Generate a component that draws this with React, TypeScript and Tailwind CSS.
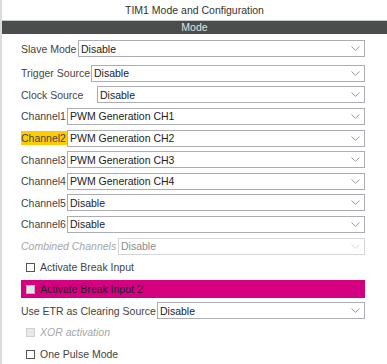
import React from "react";

type Row =
  | { kind: "select"; label: string; value: string; labelWidth: number; highlight?: boolean; disabled?: boolean }
  | { kind: "check"; label: string; bar?: boolean; disabled?: boolean };

const rows: Row[] = [
  { kind: "select", label: "Trigger Source", value: "Disable", labelWidth: 70 },
  { kind: "select", label: "Clock Source", value: "Disable", labelWidth: 76 },
  { kind: "select", label: "Channel1", value: "PWM Generation CH1", labelWidth: 46 },
  { kind: "select", label: "Channel2", value: "PWM Generation CH2", labelWidth: 46, highlight: true },
  { kind: "select", label: "Channel3", value: "PWM Generation CH3", labelWidth: 46 },
  { kind: "select", label: "Channel4", value: "PWM Generation CH4", labelWidth: 46 },
  { kind: "select", label: "Channel5", value: "Disable", labelWidth: 46 },
  { kind: "select", label: "Channel6", value: "Disable", labelWidth: 46 },
  { kind: "select", label: "Combined Channels", value: "Disable", labelWidth: 97, disabled: true },
  { kind: "check", label: "Activate Break Input" },
  { kind: "check", label: "Activate Break Input 2", bar: true },
  { kind: "select", label: "Use ETR as Clearing Source", value: "Disable", labelWidth: 136 },
  { kind: "check", label: "XOR activation", disabled: true },
  { kind: "check", label: "One Pulse Mode" },
];

function Chevron({ disabled }: { disabled?: boolean }) {
  return (
    <svg width="9" height="5" viewBox="0 0 9 5" className="mr-[4px] shrink-0">
      <path d="M0.5 0.5 L4.5 4.3 L8.5 0.5" fill="none" stroke={disabled ? "#d6d6d6" : "#9a9a9a"} strokeWidth="1" />
    </svg>
  );
}

function SelectBox({ value, disabled }: { value: string; disabled?: boolean }) {
  return (
    <div
      className={`flex h-[17px] flex-1 items-center justify-between border bg-white pl-[2px] ${
        disabled ? "border-[#d4d6d9] text-[#8c8c8c]" : "border-[#abadb3] text-[#222]"
      }`}
    >
      <span>{value}</span>
      <Chevron disabled={disabled} />
    </div>
  );
}

function CheckBox({ disabled, onBar }: { disabled?: boolean; onBar?: boolean }) {
  return (
    <span
      className={`inline-block h-[9px] w-[9px] shrink-0 border ${
        onBar
          ? "border-[#b8b8b8] bg-[#e6e6e6]"
          : disabled
          ? "border-[#cfcfcf] bg-[#e8e8e8]"
          : "border-[#555] bg-white"
      }`}
    />
  );
}

function SelectRow({ row }: { row: Extract<Row, { kind: "select" }> }) {
  return (
    <div className="flex h-[21.6px] items-center">
      <div
        className={`flex h-[14px] shrink-0 items-center ${row.highlight ? "bg-[#ffcc00]" : ""} ${
          row.disabled ? "italic text-[#a6a6a6]" : "text-[#444]"
        }`}
        style={{ width: row.labelWidth }}
      >
        {row.label}
      </div>
      <SelectBox value={row.value} disabled={row.disabled} />
    </div>
  );
}

function CheckRow({ row }: { row: Extract<Row, { kind: "check" }> }) {
  if (row.bar) {
    return (
      <div className="flex h-[21.6px] items-center">
        <div className="flex h-[18px] flex-1 items-center gap-[5px] bg-[#d5007f] pl-[5px] text-[#222]">
          <CheckBox onBar />
          <span>{row.label}</span>
        </div>
      </div>
    );
  }
  return (
    <div className="flex h-[21.6px] items-center gap-[5px] pl-[5px]">
      <CheckBox disabled={row.disabled} />
      <span className={row.disabled ? "italic text-[#a6a6a6]" : "text-[#444]"}>{row.label}</span>
    </div>
  );
}

export default function App() {
  return (
    <div
      className="relative h-[364px] w-[387px] overflow-hidden border-l-2 border-[#dcdcdc] bg-white text-[10.5px] leading-none"
      style={{ fontFamily: '"Liberation Sans", Arial, sans-serif' }}
    >
      <div className="flex h-[20px] items-center justify-center text-[10.5px] text-[#333]">
        TIM1 Mode and Configuration
      </div>
      <div className="flex h-[14px] items-center justify-center border-t border-[#c9c9c9] bg-[#4b4d4d] text-[#e2e2e2]">
        Mode
      </div>
      <div className="pl-[19px] pr-[22px] pt-[4px]">
        <div className="flex h-[21.6px] items-center">
          <div className="w-[57px] shrink-0 text-[#444]">Slave Mode</div>
          <SelectBox value="Disable" />
        </div>
        <div className="mt-[3px]">
          {rows.map((row) =>
            row.kind === "select" ? (
              <SelectRow key={row.label} row={row} />
            ) : (
              <CheckRow key={row.label} row={row} />
            )
          )}
        </div>
      </div>
    </div>
  );
}
